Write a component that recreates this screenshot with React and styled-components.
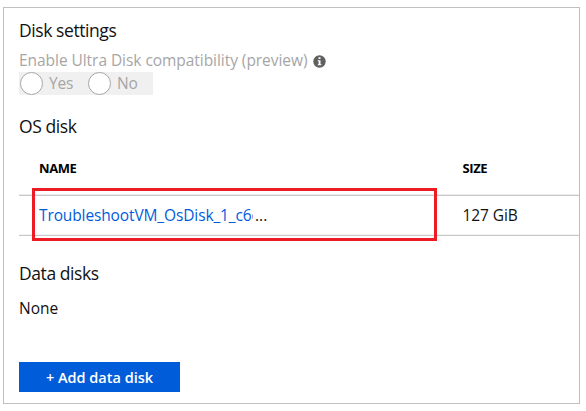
import React from "react";
import styled, { createGlobalStyle } from "styled-components";

const Global = createGlobalStyle`
  * { box-sizing: border-box; }
  body {
    margin: 0;
    background: #fff;
    color: #111;
    font-family: "Open Sans", "Noto Sans", sans-serif;
    font-size: 15.5px;
  }
`;

const Page = styled.main`
  width: 586px;
  height: 411px;
  padding: 7px 6px 7px 3px;
`;

const Panel = styled.section`
  height: 397px;
  border: 1px solid #c0c0c0;
  padding: 9px 0 0 15px;
`;

const Heading = styled.h2`
  margin: 0;
  height: 26px;
  line-height: 26px;
  font-size: 17.5px;
  font-weight: 400;
  letter-spacing: -0.42px;
  white-space: nowrap;
`;

const OptionLabel = styled.div`
  display: flex;
  align-items: center;
  gap: 6px;
  margin-top: 6px;
  height: 22px;
  color: #a6a6a6;
  letter-spacing: -0.05px;
  white-space: nowrap;
`;

const InfoIcon = styled.svg`
  width: 13px;
  height: 13px;
  margin-top: 3px;
`;

const RadioGroup = styled.div`
  display: flex;
  align-items: center;
  width: 134px;
  height: 23px;
  margin-top: 1px;
  background: #f0f0f0;
  color: #a6a6a6;
`;

const RadioOption = styled.label`
  display: flex;
  align-items: center;
  gap: 6px;
  width: ${(p) => p.$width}px;
  height: 23px;
  padding-left: 1px;
  line-height: 25px;
  letter-spacing: -0.2px;
`;

const RadioCircle = styled.span`
  flex: none;
  width: 23px;
  height: 23px;
  border: 1px solid #a6a6a6;
  border-radius: 50%;
  background: #fff;
`;

const OsHeading = styled(Heading)`
  margin-top: 18px;
`;

const Table = styled.div`
  height: 96px;
  padding-top: 1px;
  margin-top: 1px;
`;

const Row = styled.div`
  display: grid;
  grid-template-columns: 423.5px 1fr;
  align-items: center;
  padding-left: 20px;
  height: ${(p) => p.$height}px;
  border-bottom: 1px solid #c8c8c8;
`;

const HeaderRow = styled(Row)`
  box-shadow: inset 0 -1px #ededed;
  font-size: 13px;
  font-weight: 700;
  color: #000;
  letter-spacing: -0.4px;
`;

const DiskRow = styled(Row)`
  position: relative;
  box-shadow: inset 0 -1px #f4f4f4;
`;

const DiskName = styled.span`
  display: flex;
  gap: 2px;
  line-height: 22px;
  margin-top: -1px;
  white-space: nowrap;
`;

const DiskLink = styled.a`
  width: 214px;
  overflow: hidden;
  color: #015cda;
  letter-spacing: -0.12px;
`;

const Size = styled.span`
  line-height: 22px;
  margin-top: -1px;
  letter-spacing: -0.1px;
`;

const Highlight = styled.div`
  position: absolute;
  left: 13px;
  top: -8px;
  width: 405px;
  height: 53px;
  border: 3px solid #ed1c24;
  pointer-events: none;
`;

const DataHeading = styled(Heading)`
  margin-top: 24px;
`;

const Empty = styled.p`
  margin: 11px 0 0;
  height: 22px;
  line-height: 22px;
`;

const AddButton = styled.button`
  display: block;
  width: 161px;
  height: 30px;
  margin-top: 43px;
  padding: 0;
  border: 0;
  background: #015cda;
  color: #fff;
  font: 600 14.5px "Open Sans", sans-serif;
  white-space: nowrap;
`;

export default function App() {
  return (
    <Page>
      <Global />
      <Panel>
        <Heading>Disk settings</Heading>
        <OptionLabel>
          Enable Ultra Disk compatibility (preview)
          <InfoIcon viewBox="0 0 13 13">
            <circle cx="6.5" cy="6.5" r="6.2" fill="#5f5f5f" />
            <path d="M5.5 2.3h2v1.8h-2zM4.7 5.2h2.8v4h.9v1H4.7v-1h.9v-3h-.9z" fill="#fff" />
          </InfoIcon>
        </OptionLabel>
        <RadioGroup>
          <RadioOption $width={68}>
            <RadioCircle />
            Yes
          </RadioOption>
          <RadioOption $width={66}>
            <RadioCircle />
            No
          </RadioOption>
        </RadioGroup>
        <OsHeading>OS disk</OsHeading>
        <Table>
          <HeaderRow $height={55}>
            <span>NAME</span>
            <span>SIZE</span>
          </HeaderRow>
          <DiskRow $height={40}>
            <DiskName>
              <DiskLink>TroubleshootVM_OsDisk_1_c6c</DiskLink>
              <span>...</span>
            </DiskName>
            <Size>127 GiB</Size>
            <Highlight />
          </DiskRow>
        </Table>
        <DataHeading>Data disks</DataHeading>
        <Empty>None</Empty>
        <AddButton>+ Add data disk</AddButton>
      </Panel>
    </Page>
  );
}
